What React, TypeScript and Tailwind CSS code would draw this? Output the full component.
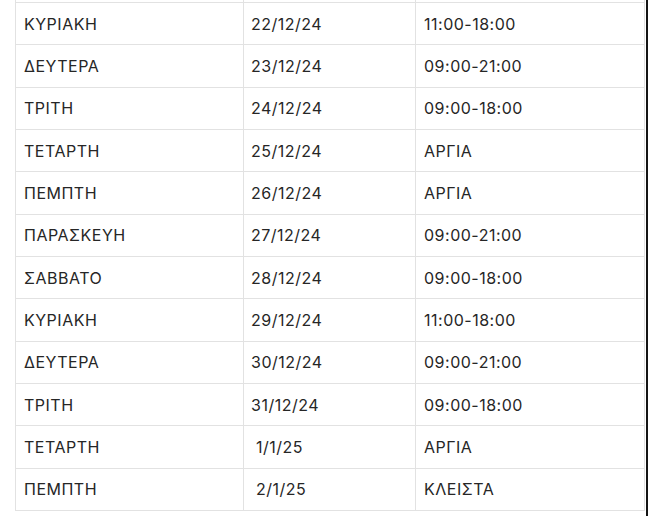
const rows: [string, string, string][] = [
  ["ΚΥΡΙΑΚΗ", "22/12/24", "11:00-18:00"],
  ["ΔΕΥΤΕΡΑ", "23/12/24", "09:00-21:00"],
  ["ΤΡΙΤΗ", "24/12/24", "09:00-18:00"],
  ["ΤΕΤΑΡΤΗ", "25/12/24", "ΑΡΓΙΑ"],
  ["ΠΕΜΠΤΗ", "26/12/24", "ΑΡΓΙΑ"],
  ["ΠΑΡΑΣΚΕΥΗ", "27/12/24", "09:00-21:00"],
  ["ΣΑΒΒΑΤΟ", "28/12/24", "09:00-18:00"],
  ["ΚΥΡΙΑΚΗ", "29/12/24", "11:00-18:00"],
  ["ΔΕΥΤΕΡΑ", "30/12/24", "09:00-21:00"],
  ["ΤΡΙΤΗ", "31/12/24", "09:00-18:00"],
  ["ΤΕΤΑΡΤΗ", "\u00a01/1/25", "ΑΡΓΙΑ"],
  ["ΠΕΜΠΤΗ", "\u00a02/1/25", "ΚΛΕΙΣΤΑ"],
];

export default function App() {
  return (
    <div className="w-[648px] h-[516px] bg-white flex overflow-hidden">
      <div className="w-[15px]" />
      <div className="w-[630px] flex flex-col font-['Inter',sans-serif] text-[16px] tracking-[0.5px] text-[#262626]">
        {/* tail of the row above, cut off by the screenshot */}
        <div className="flex h-[2px] shrink-0">
          <div className="w-[228px] border-l border-[#e2e2e2]" />
          <div className="w-[172px] border-l border-[#e2e2e2]" />
          <div className="flex-1 border-l border-r border-[#e2e2e2]" />
        </div>
        <div className="border-t border-[#e2e2e2]">
          {rows.map(([day, date, hours], i) => (
            <div key={i} className="flex h-[42.33px] border-b border-[#e2e2e2]">
              <div className="w-[228px] border-l border-[#e2e2e2] pl-[8px] flex items-center">{day}</div>
              <div className="w-[172px] border-l border-[#e2e2e2] pl-[7px] flex items-center">{date}</div>
              <div className="flex-1 border-l border-r border-[#e2e2e2] pl-[8px] flex items-center">{hours}</div>
            </div>
          ))}
        </div>
      </div>
      <div className="w-[1px]" />
      <div className="w-[2px] bg-[#141414]" />
    </div>
  );
}
